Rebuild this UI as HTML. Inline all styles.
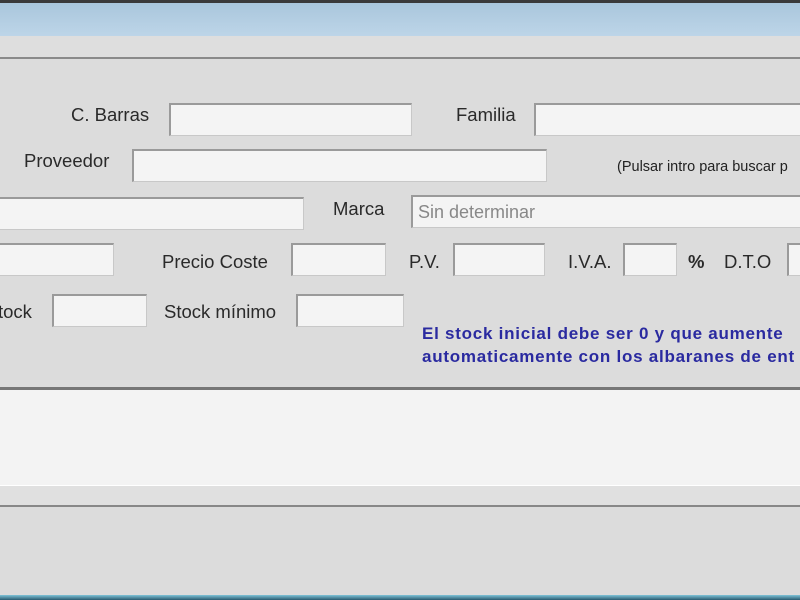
<!DOCTYPE html>
<html><head><style>
body{margin:0;width:800px;height:600px;overflow:hidden;background:#dcdcdc;font-family:"Liberation Sans",sans-serif;position:relative}
div{position:absolute}
.l{font-size:18.5px;color:#2a2a2a;white-space:nowrap}
.i{background:#f4f4f4;border:1px solid #c8c8c8;border-top:2px solid #9a9a9a;border-left:2px solid #9a9a9a;box-sizing:border-box}
</style></head><body>
<div style="left:0;top:0;width:800px;height:3px;background:#3a3a3a"></div>
<div style="left:0;top:3px;width:800px;height:33px;background:linear-gradient(#a9c6dc,#bdd5e8)"></div>
<div style="left:0;top:36px;width:800px;height:21px;background:#dedede"></div>
<div style="left:0;top:57px;width:800px;height:2px;background:#8a8a8a"></div>
<div class="l" style="left:71px;top:104px">C. Barras</div>
<div class="i" style="left:169px;top:103px;width:243px;height:33px"></div>
<div class="l" style="left:456px;top:104px">Familia</div>
<div class="i" style="left:534px;top:103px;width:270px;height:33px"></div>
<div class="l" style="left:24px;top:150px">Proveedor</div>
<div class="i" style="left:132px;top:149px;width:415px;height:33px"></div>
<div style="left:617px;top:159px;font-size:14.5px;color:#222;white-space:nowrap">(Pulsar intro para buscar p</div>
<div class="i" style="left:-5px;top:197px;width:309px;height:33px"></div>
<div class="l" style="left:333px;top:198px">Marca</div>
<div class="i" style="left:411px;top:195px;width:395px;height:33px;color:#888;font-size:18px;padding:5px 0 0 5px">Sin determinar</div>
<div class="i" style="left:-5px;top:243px;width:119px;height:33px"></div>
<div class="l" style="left:162px;top:251px">Precio Coste</div>
<div class="i" style="left:291px;top:243px;width:95px;height:33px"></div>
<div class="l" style="left:409px;top:251px">P.V.</div>
<div class="i" style="left:453px;top:243px;width:92px;height:33px"></div>
<div class="l" style="left:568px;top:251px">I.V.A.</div>
<div class="i" style="left:623px;top:243px;width:54px;height:33px"></div>
<div class="l" style="left:688px;top:251px;font-weight:bold">%</div>
<div class="l" style="left:724px;top:251px">D.T.O</div>
<div class="i" style="left:787px;top:243px;width:30px;height:33px"></div>
<div class="l" style="left:-2px;top:301px">tock</div>
<div class="i" style="left:52px;top:294px;width:95px;height:33px"></div>
<div class="l" style="left:164px;top:301px">Stock mínimo</div>
<div class="i" style="left:296px;top:294px;width:108px;height:33px"></div>
<div style="left:422px;top:322px;font-size:17px;letter-spacing:0.75px;font-weight:bold;color:#2a2aa0;line-height:23px;white-space:nowrap">El stock inicial debe ser 0 y que aumente<br>automaticamente con los albaranes de ent</div>
<div style="left:0;top:387px;width:800px;height:3px;background:#777"></div>
<div style="left:0;top:390px;width:800px;height:95px;background:#f3f3f3"></div>
<div style="left:0;top:485px;width:800px;height:20px;background:#e0e0e0;border-top:1px solid #fff"></div>
<div style="left:0;top:505px;width:800px;height:2px;background:#888"></div>
<div style="left:0;top:595px;width:800px;height:5px;background:linear-gradient(#7fc4d8,#2a5a70)"></div>
</body></html>
